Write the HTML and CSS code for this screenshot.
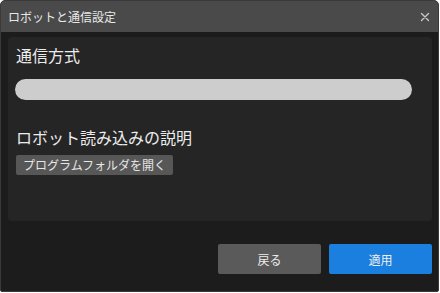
FILE: index.html
```html
<!DOCTYPE html>
<html lang="ja">
<head>
    <meta charset="UTF-8">
    <meta name="viewport" content="width=device-width, initial-scale=1.0">
    <title>ロボットと通信設定</title>
    <link rel="stylesheet" href="styles.css">
</head>
<body>
    <div class="janela">
        <div class="barra-titulo">
            <span class="titulo">ロボットと通信設定</span>
            <button class="fechar" aria-label="閉じる">
                <svg width="10" height="10" viewBox="0 0 10 10">
                    <path d="M1.5 1.5 L8.5 8.5 M8.5 1.5 L1.5 8.5" stroke="#c8c8c8" stroke-width="1.4" stroke-linecap="round"/>
                </svg>
            </button>
        </div>
        <div class="conteudo">
            <div class="painel">
                <h2>通信方式</h2>
                <div class="seletor"></div>
                <h2 class="segundo">ロボット読み込みの説明</h2>
                <button class="abrir">プログラムフォルダを開く</button>
            </div>
        </div>
        <div class="botoeira">
            <button class="voltar">戻る</button>
            <button class="aplicar">適用</button>
        </div>
    </div>
</body>
</html>
```

FILE: styles.css
```css
* {
    font-family: "Noto Sans CJK JP", "Noto Sans", sans-serif;
    box-sizing: border-box;
}
body {
    margin: 0;
    background: #ffffff;
}
.janela {
    width: 439px;
    height: 292px;
    border: 1px solid #3a3a3a;
    border-radius: 5px 5px 2px 2px;
    background: #1c1c1c;
    overflow: hidden;
    display: flex;
    flex-direction: column;
}
.barra-titulo {
    height: 31px;
    flex: none;
    background: #4a4a4a;
    display: flex;
    align-items: center;
    justify-content: space-between;
    padding: 0 6px 0 7px;
}
.titulo {
    color: #e8e8e8;
    font-size: 12px;
    line-height: 16px;
}
.fechar {
    background: none;
    border: 0;
    padding: 0;
    width: 14px;
    height: 14px;
    display: flex;
    align-items: center;
    justify-content: center;
}
.conteudo {
    padding: 5px 6px 0 7px;
}
.painel {
    height: 184px;
    background: #252525;
    border-radius: 4px;
    padding: 6px 8px;
}
.painel h2 {
    margin: 0;
    color: #ececec;
    font-size: 16px;
    font-weight: normal;
    line-height: 24px;
}
.seletor {
    width: 397px;
    height: 21px;
    margin: 12px 0 0 -1px;
    background: #cdcdcd;
    border-radius: 11px;
}
.painel h2.segundo {
    margin-top: 25px;
}
.abrir {
    margin-top: 6px;
    height: 20px;
    padding: 0 7px;
    background: #575757;
    color: #e6e6e6;
    border: 0;
    border-radius: 2px;
    font-size: 12px;
    line-height: 20px;
}
.botoeira {
    display: flex;
    justify-content: flex-end;
    gap: 8px;
    padding: 23px 6px 0 0;
}
.botoeira button {
    width: 103px;
    height: 30px;
    border: 0;
    border-radius: 2px;
    color: #eeeeee;
    font-size: 12px;
}
.voltar {
    background: #5a5a5a;
}
.aplicar {
    background: #1b7fdf;
}
```
